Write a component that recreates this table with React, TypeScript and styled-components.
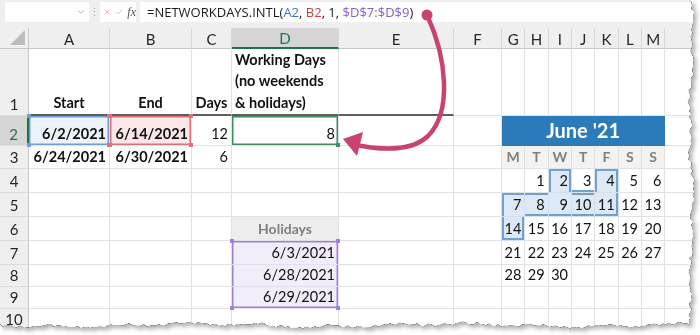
import React from 'react';
import styled, { createGlobalStyle } from 'styled-components';
import { Check, ChevronDown, X } from 'lucide-react';

const CELL_FONT = `Lato, "Liberation Sans", sans-serif`;
const UI_FONT = `"Open Sans", "Noto Sans", sans-serif`;
const GRID_LINE = '#e1e1e1';
const EXCEL_GREEN = '#217346';
const PINK = '#c9436f';

const GlobalStyle = createGlobalStyle`
  html, body {
    margin: 0;
    padding: 0;
    background: #fff;
  }
  body {
    width: 700px;
    height: 335px;
    overflow: hidden;
  }
`;

// ragged right and bottom edge, like a page torn out of a notebook
const tornEdge = (() => {
  let seed = 11;
  const rnd = () => {
    seed = (seed * 16807) % 2147483647;
    return seed / 2147483647;
  };
  const pts: string[] = ['0px 0px'];
  for (let y = 0; y <= 322; y += 3) {
    const x = 691 + Math.sin(y / 9) * 1.2 + Math.sin(y / 27) * 1.6 + (rnd() - 0.5) * 3.4;
    pts.push(`${x.toFixed(1)}px ${y}px`);
  }
  for (let x = 690; x >= 0; x -= 3) {
    const y = 325 + Math.sin(x / 11) * 1.1 + Math.sin(x / 41) * 1.4 + (rnd() - 0.5) * 3;
    pts.push(`${x}px ${y.toFixed(1)}px`);
  }
  return `polygon(${pts.join(', ')})`;
})();

const Frame = styled.div`
  width: 700px;
  height: 335px;
  filter: drop-shadow(0 0 0.5px #111) drop-shadow(0 0 0.4px #222) drop-shadow(3px 3px 2px rgb(0 0 0 / 30%));
`;

const Paper = styled.div`
  position: relative;
  width: 700px;
  height: 335px;
  background: #fff;
  clip-path: ${tornEdge};
  overflow: hidden;
`;

/* ---------- formula bar ---------- */

const FormulaBar = styled.div`
  display: flex;
  align-items: center;
  height: 28px;
  padding: 0 0 4px 5px;
  box-sizing: border-box;
  background: #efefef;
  font-family: ${UI_FONT};
`;

const NameBox = styled.div`
  display: flex;
  align-items: center;
  justify-content: flex-end;
  width: 84px;
  height: 20px;
  padding-right: 3px;
  box-sizing: border-box;
  background: #fff;
  color: #888;
`;

const Grip = styled.span`
  width: 11px;
  text-align: center;
  color: #a3a3a3;
  font-size: 11px;
  line-height: 20px;
`;

const EditTools = styled.div`
  display: flex;
  align-items: center;
  gap: 3px;
  width: 36px;
  height: 20px;
  padding-left: 3px;
  box-sizing: border-box;
  background: #fff;
`;

const FxMark = styled.span`
  font: italic 12px "Liberation Serif", serif;
  color: #555;
  margin-left: 1px;
`;

const FormulaInput = styled.div`
  flex: 1;
  height: 20px;
  margin-left: 4px;
  padding-left: 7px;
  background: #fff;
  font-size: 13px;
  line-height: 20px;
  color: #1a1a1a;
  white-space: pre;
`;

const Ref = styled.span<{ $tint: string }>`
  color: ${({ $tint }) => $tint};
`;

/* ---------- sheet grid ---------- */

const Sheet = styled.div`
  display: grid;
  grid-template-columns: 29px 81px 82px 40px 107px 115px 48px repeat(7, 23.33px) 1fr;
  grid-template-rows: 21px 67px 30px 23px 24px 24px 24px 24px 22px 22px 22px;
  font-family: ${CELL_FONT};
`;

const Corner = styled.div`
  position: relative;
  background: #efefef;
  border-right: 1px solid #c8c8c8;
  border-bottom: 1px solid #c8c8c8;
  &::after {
    content: '';
    position: absolute;
    right: 3px;
    bottom: 3px;
    border-left: 15px solid transparent;
    border-bottom: 15px solid #bdbdbd;
  }
`;

const ColHead = styled.div<{ $active?: boolean }>`
  display: flex;
  align-items: center;
  justify-content: center;
  box-sizing: border-box;
  background: ${({ $active }) => ($active ? '#d5d5d5' : '#efefef')};
  color: ${({ $active }) => ($active ? EXCEL_GREEN : '#262626')};
  border-right: 1px solid #d6d6d6;
  border-bottom: ${({ $active }) => ($active ? `2px solid ${EXCEL_GREEN}` : '1px solid #c8c8c8')};
  font-size: 15px;
  padding-top: 1px;
`;

const RowHead = styled.div<{ $active?: boolean }>`
  display: flex;
  align-items: flex-end;
  justify-content: center;
  box-sizing: border-box;
  padding-bottom: 1px;
  background: ${({ $active }) => ($active ? '#d5d5d5' : '#efefef')};
  color: ${({ $active }) => ($active ? EXCEL_GREEN : '#262626')};
  border-bottom: 1px solid #dcdcdc;
  border-right: ${({ $active }) => ($active ? `2px solid ${EXCEL_GREEN}` : '1px solid #c8c8c8')};
  font-size: 15px;
  line-height: 20px;
`;

type Align = 'left' | 'center' | 'right';
type Tone = 'plain' | 'start' | 'end' | 'result' | 'holiday' | 'month' | 'weekday' | 'holHead' | 'workday';
type Sides = { t?: boolean; r?: boolean; b?: boolean; l?: boolean };

const TONES: Record<
  Tone,
  { bg: string; color: string; line?: string; ring?: string; ringWidth?: number; size?: number }
> = {
  plain: { bg: '#fff', color: '#111' },
  start: { bg: '#edf3fb', color: '#111', ring: '#6f9fd8', ringWidth: 1.5 },
  end: { bg: '#fbe7e8', color: '#111', ring: '#e07078', ringWidth: 1.5 },
  result: { bg: '#fff', color: '#111', ring: '#3f8d5e', ringWidth: 1.5 },
  holiday: { bg: '#f1edf9', color: '#111', line: '#e4def2', ring: '#9f82d8', ringWidth: 1.5 },
  month: { bg: '#2b7bba', color: '#fff', line: '#2b7bba', size: 20 },
  weekday: { bg: '#f2f2f2', color: '#7f7f7f', size: 14 },
  holHead: { bg: '#ededed', color: '#7f7f7f', size: 14 },
  workday: { bg: '#dde9f6', color: '#111', line: '#d2e1f1', ring: '#6ea2d6', ringWidth: 2 },
};

const ringShadow = (sides: Sides | undefined, color?: string, w = 1.5) => {
  if (!sides || !color) return 'none';
  const parts: string[] = [];
  if (sides.l) parts.push(`inset ${w}px 0 0 ${color}`);
  if (sides.r) parts.push(`inset -${w}px 0 0 ${color}`);
  if (sides.t) parts.push(`inset 0 ${w}px 0 ${color}`);
  if (sides.b) parts.push(`inset 0 -${w}px 0 ${color}`);
  return parts.length ? parts.join(', ') : 'none';
};

const JUSTIFY: Record<Align, string> = { left: 'flex-start', center: 'center', right: 'flex-end' };

const Cell = styled.div<{
  $align: Align;
  $bold?: boolean;
  $tone: Tone;
  $ring: string;
  $span: number;
  $heavy?: boolean;
  $leading?: number;
}>`
  position: relative;
  display: flex;
  align-items: ${({ $tone }) => ($tone === 'month' ? 'center' : 'flex-end')};
  justify-content: ${({ $align }) => JUSTIFY[$align]};
  grid-column: span ${({ $span }) => $span};
  box-sizing: border-box;
  padding: 0 3px 1px;
  background: ${({ $tone }) => TONES[$tone].bg};
  color: ${({ $tone }) => TONES[$tone].color};
  border-right: 1px solid ${({ $tone }) => TONES[$tone].line ?? GRID_LINE};
  border-bottom: ${({ $heavy, $tone }) =>
    $heavy ? '2px solid #5f5f5f' : `1px solid ${TONES[$tone].line ?? GRID_LINE}`};
  box-shadow: ${({ $ring }) => $ring};
  font-size: ${({ $tone }) => TONES[$tone].size ?? 14.5}px;
  font-weight: ${({ $bold }) => ($bold ? 700 : 400)};
  line-height: ${({ $leading }) => $leading ?? 20}px;
  white-space: pre-line;
  text-align: ${({ $align }) => $align};
`;

const Handle = styled.span<{ $at: 'tl' | 'tr' | 'bl' | 'br'; $tint: string }>`
  position: absolute;
  width: 4px;
  height: 4px;
  background: ${({ $tint }) => $tint};
  ${({ $at }) => ($at[0] === 't' ? 'top: -2px;' : 'bottom: -2px;')}
  ${({ $at }) => ($at[1] === 'l' ? 'left: -2px;' : 'right: -2px;')}
  z-index: 2;
`;

interface CellData {
  text?: string;
  align?: Align;
  bold?: boolean;
  tone?: Tone;
  span?: number;
  sides?: Sides;
  leading?: number;
  handles?: Array<'tl' | 'tr' | 'bl' | 'br'>;
}

const COLS = ['A', 'B', 'C', 'D', 'E', 'F', 'G', 'H', 'I', 'J', 'K', 'L', 'M'];
const ALL: Sides = { t: true, r: true, b: true, l: true };
const CORNERS: Array<'tl' | 'tr' | 'bl' | 'br'> = ['tl', 'tr', 'bl', 'br'];

const cells: Record<string, CellData> = {
  A1: { text: 'Start', align: 'center', bold: true },
  B1: { text: 'End', align: 'center', bold: true },
  C1: { text: 'Days', align: 'center', bold: true },
  D1: { text: 'Working Days\n(no weekends\n& holidays)', align: 'left', bold: true, leading: 21.5 },
  A2: { text: '6/2/2021', align: 'right', bold: true, tone: 'start', sides: ALL, handles: CORNERS },
  B2: { text: '6/14/2021', align: 'right', bold: true, tone: 'end', sides: ALL, handles: CORNERS },
  C2: { text: '12', align: 'right' },
  D2: { text: '8', align: 'right', tone: 'result', sides: ALL, handles: ['br'] },
  G2: { text: "June '21", align: 'center', bold: true, tone: 'month', span: 7 },
  A3: { text: '6/24/2021', align: 'right', bold: true },
  B3: { text: '6/30/2021', align: 'right', bold: true },
  C3: { text: '6', align: 'right' },
  D6: { text: 'Holidays', align: 'center', bold: true, tone: 'holHead' },
  D7: { text: '6/3/2021', align: 'right', tone: 'holiday', sides: { t: true, l: true, r: true }, handles: ['tl', 'tr'] },
  D8: { text: '6/28/2021', align: 'right', tone: 'holiday', sides: { l: true, r: true } },
  D9: { text: '6/29/2021', align: 'right', tone: 'holiday', sides: { l: true, r: true, b: true }, handles: ['bl', 'br'] },
};

// weekday letters above the month
['M', 'T', 'W', 'T', 'F', 'S', 'S'].forEach((d, i) => {
  cells[`${COLS[6 + i]}3`] = { text: d, align: 'center', bold: true, tone: 'weekday' };
});

// June 2021 starts on a Tuesday; business days counted by the formula are shaded
const counted = new Set([2, 4, 7, 8, 9, 10, 11, 14]);
const slotOf = (day: number) => ({ row: 4 + Math.floor(day / 7), col: 6 + (day % 7) });
const countedAt = (row: number, col: number) =>
  [...counted].some((d) => {
    const s = slotOf(d);
    return s.row === row && s.col === col;
  });
for (let day = 1; day <= 30; day++) {
  const { row, col } = slotOf(day);
  const on = counted.has(day);
  cells[`${COLS[col]}${row}`] = {
    text: String(day),
    align: 'right',
    tone: on ? 'workday' : 'plain',
    sides: on
      ? {
          t: !countedAt(row - 1, col),
          b: !countedAt(row + 1, col),
          l: !countedAt(row, col - 1),
          r: !countedAt(row, col + 1),
        }
      : undefined,
  };
}
// J4 sits between two shaded days, so its bottom edge joins the outline
cells.J4 = { ...cells.J4, tone: 'plain', sides: { b: true } };

const renderRow = (row: number) => {
  const out: React.ReactNode[] = [
    <RowHead key={`h${row}`} $active={row === 2}>
      {row}
    </RowHead>,
  ];
  for (let c = 0; c < COLS.length; ) {
    const id = `${COLS[c]}${row}`;
    const data = cells[id] ?? {};
    const tone = data.tone ?? 'plain';
    const spec = TONES[tone];
    const span = data.span ?? 1;
    const ringColor = id === 'J4' ? TONES.workday.ring : spec.ring;
    const ringWidth = id === 'J4' ? TONES.workday.ringWidth : spec.ringWidth;
    out.push(
      <Cell
        key={id}
        $align={data.align ?? 'left'}
        $bold={data.bold}
        $tone={tone}
        $span={span}
        $heavy={row === 1 && c <= 4}
        $leading={data.leading}
        $ring={ringShadow(data.sides, ringColor, ringWidth)}
      >
        {data.text}
        {data.handles?.map((h) => (
          <Handle key={h} $at={h} $tint={spec.ring ?? EXCEL_GREEN} />
        ))}
      </Cell>,
    );
    c += span;
  }
  out.push(<Cell key={`f${row}`} $align="left" $tone="plain" $span={1} $ring="none" />);
  return out;
};

const ArrowLayer = styled.svg`
  position: absolute;
  left: 0;
  top: 0;
  pointer-events: none;
`;

const App: React.FC = () => {
  return (
    <>
      <GlobalStyle />
      <Frame>
        <Paper>
          <FormulaBar>
            <NameBox>
              <ChevronDown size={10} strokeWidth={1.5} />
            </NameBox>
            <Grip>⋮</Grip>
            <EditTools>
              <X size={12} color="#e77a7c" strokeWidth={1.8} />
              <Check size={12} color="#84bb84" strokeWidth={1.8} />
              <FxMark>fx</FxMark>
            </EditTools>
            <FormulaInput>
              =NETWORKDAYS.INTL(<Ref $tint="#3f74c4">A2</Ref>, <Ref $tint="#cf3f45">B2</Ref>, 1,{' '}
              <Ref $tint="#8a5cc8">$D$7:$D$9</Ref>)
            </FormulaInput>
          </FormulaBar>
          <Sheet>
            <Corner />
            {COLS.map((col) => (
              <ColHead key={col} $active={col === 'D'}>
                {col}
              </ColHead>
            ))}
            <ColHead />
            {Array.from({ length: 10 }, (_, i) => renderRow(i + 1))}
          </Sheet>
          <ArrowLayer width={700} height={335} viewBox="0 0 700 335">
            <circle cx="427" cy="15" r="5.5" fill={PINK} />
            <path
              d="M427 15 C447 58 452 112 428 136 C412 151 386 151 356 145"
              fill="none"
              stroke={PINK}
              strokeWidth="4.5"
              strokeLinecap="round"
            />
            <path d="M343 139 L363 132 L357 156 Z" fill={PINK} strokeLinejoin="round" />
          </ArrowLayer>
        </Paper>
      </Frame>
    </>
  );
};

export default App;
